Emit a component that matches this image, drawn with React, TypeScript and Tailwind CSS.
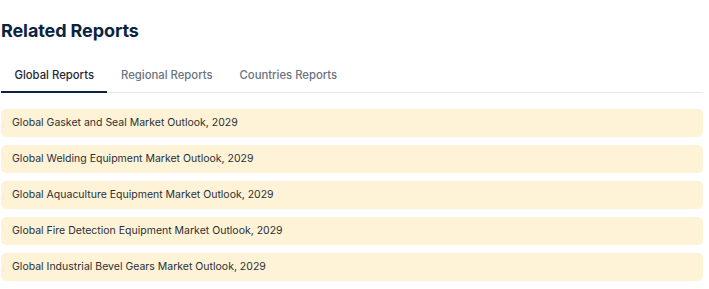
import { useState } from "react";

const tabs = ["Global Reports", "Regional Reports", "Countries Reports"];

const reports = [
  "Global Gasket and Seal Market Outlook, 2029",
  "Global Welding Equipment Market Outlook, 2029",
  "Global Aquaculture Equipment Market Outlook, 2029",
  "Global Fire Detection Equipment Market Outlook, 2029",
  "Global Industrial Bevel Gears Market Outlook, 2029",
];

export default function App() {
  const [active, setActive] = useState(0);

  return (
    <div className="min-h-screen bg-white font-['Inter',sans-serif]">
      <section className="w-[703px] pl-px pt-[19px]">
        <h2 className="text-[18px] font-bold leading-6 text-[#0b2341] tracking-[-0.1px]">
          Related Reports
        </h2>

        {/* tab bar */}
        <div className="mt-[19px] flex border-b border-[#e5e7eb]">
          {tabs.map((t, i) => (
            <button
              key={t}
              onClick={() => setActive(i)}
              className={
                i === active
                  ? "-mb-px border-b-2 border-[#0b2341] px-[13.5px] pt-[5px] pb-[8px] text-[11.3px] font-medium leading-4 text-[#1f2937]"
                  : "-mb-px border-b-2 border-transparent px-[13.5px] pt-[5px] pb-[8px] text-[11.3px] font-medium leading-4 text-[#6b7280]"
              }
            >
              {t}
            </button>
          ))}
        </div>

        {/* report list */}
        <ul className="mt-[16px] flex flex-col gap-2">
          {reports.map((r) => (
            <li
              key={r}
              className="flex h-[28px] items-center rounded-[5px] bg-[#fef3d7] px-[11px] text-[10.5px] text-[#2b2f36]"
            >
              {r}
            </li>
          ))}
        </ul>
      </section>
    </div>
  );
}
